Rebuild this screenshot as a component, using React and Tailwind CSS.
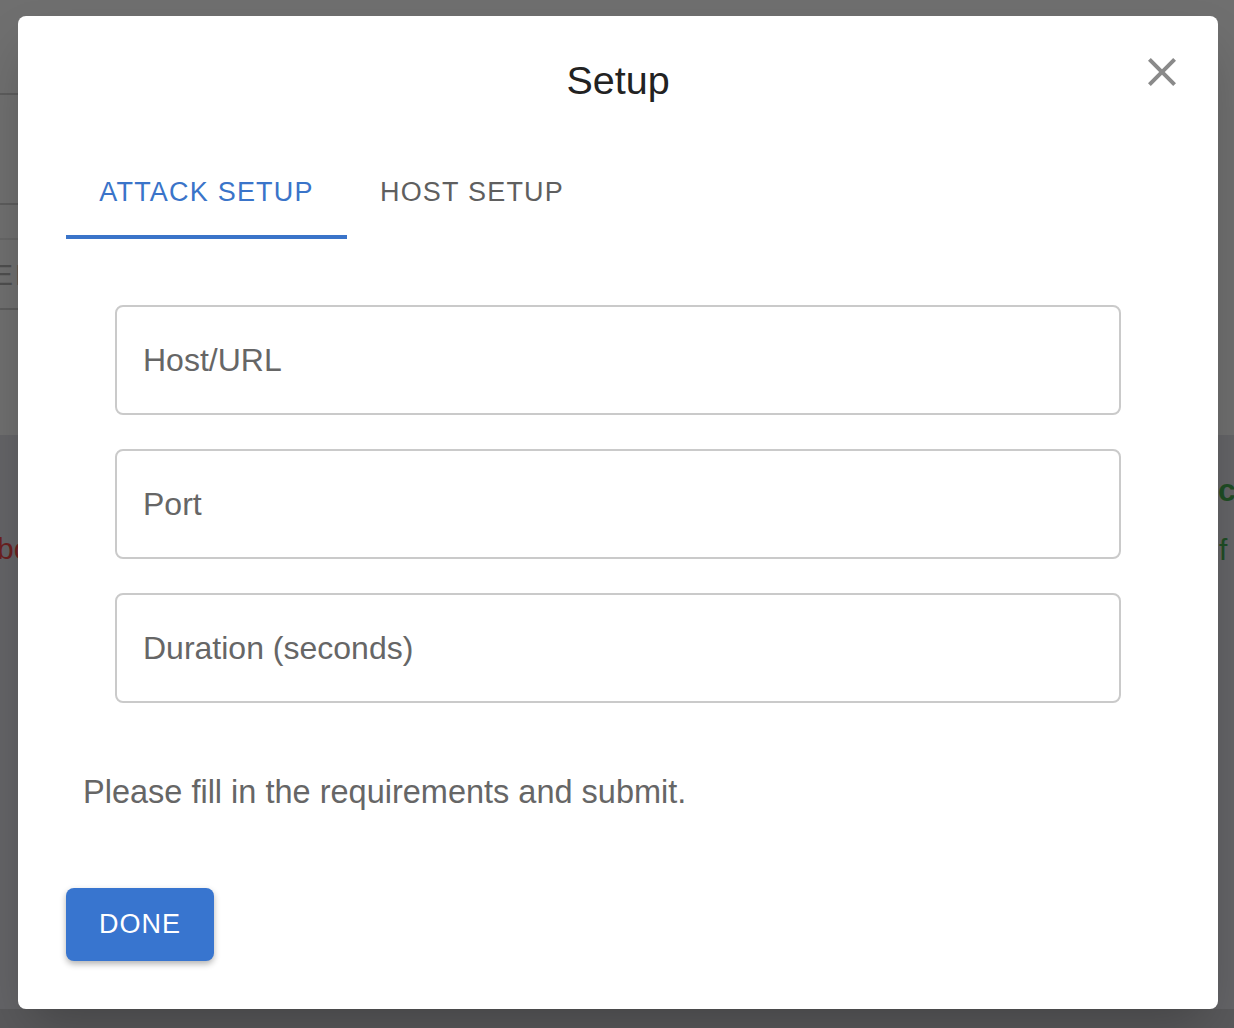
import React, { useState } from 'react';

const font = { fontFamily: '"Liberation Sans", Arial, sans-serif' };

function CloseIcon() {
  return (
    <svg viewBox="0 0 24 24" className="h-[48px] w-[48px]" fill="#8a8a8a">
      <path d="M19 6.41 17.59 5 12 10.59 6.41 5 5 6.41 10.59 12 5 17.59 6.41 19 12 13.41 17.59 19 19 17.59 13.41 12z" />
    </svg>
  );
}

function Field({ label }) {
  return (
    <div className="h-[110px] border-2 border-[#cacaca] rounded-[8px] px-[26px] flex items-center text-[32px] text-[#666]">
      {label}
    </div>
  );
}

export default function App() {
  const [tab, setTab] = useState(0);

  return (
    <div className="relative w-[1234px] h-[1028px] overflow-hidden bg-[#646467]" style={font}>
      {/* page behind the dialog */}
      <div className="h-[435px] bg-[#6f6f6f] flex flex-col">
        <div className="h-[95px] w-[600px] border-b-2 border-[#5c5c5c]" />
        <div className="h-[110px] w-[600px] border-b-2 border-[#5c5c5c]" />
        <div className="h-[35px] w-[600px] border-b-2 border-[#666]" />
        <div className="h-[70px] w-[600px] border-b-2 border-[#5c5c5c] flex items-center">
          <span className="-ml-[7px] text-[30px] tracking-[2px] text-[#4e4e4e]">EN</span>
        </div>
      </div>
      <div className="h-[574px] flex justify-between">
        <div className="flex flex-col">
          <span className="-ml-[3px] mt-[91px] text-[30px] text-[#6b2020]">bo</span>
        </div>
        <div className="flex flex-col items-start w-[16px]">
          <span className="mt-[31px] text-[32px] font-bold text-[#1f4d25]">co</span>
          <span className="mt-[13px] text-[30px] text-[#1f4d25] ml-[1px]">f</span>
        </div>
      </div>
      <div className="h-[19px] bg-[#59595b]" />

      {/* dialog */}
      <div className="absolute left-[18px] top-[16px] w-[1200px] h-[993px] bg-white rounded-[8px] shadow-2xl flex flex-col">
        <div className="relative h-[127px] flex items-center justify-center">
          <h2 className="text-[39.5px] text-[#222] pt-[2px]">Setup</h2>
          <button className="absolute right-[32px] top-[32px]">
            <CloseIcon />
          </button>
        </div>

        <div className="ml-[48px] flex h-[96px]">
          {['ATTACK SETUP', 'HOST SETUP'].map((t, i) => (
            <button
              key={t}
              onClick={() => setTab(i)}
              className={`relative flex items-center justify-center pt-[2px] text-[27px] tracking-[1.2px] ${
                i === 0 ? 'w-[281px]' : 'w-[250px]'
              } ${tab === i ? 'text-[#3a74c9]' : 'text-[#5f5f5f]'}`}
            >
              {t}
              {tab === i && <span className="absolute left-0 right-0 bottom-0 h-[4px] bg-[#3a74c9]" />}
            </button>
          ))}
        </div>

        <div className="mx-[97px] mt-[66px] flex flex-col gap-[34px]">
          <Field label="Host/URL" />
          <Field label="Port" />
          <Field label="Duration (seconds)" />
        </div>

        <p className="ml-[65px] mt-[69px] text-[32.5px] leading-[40px] text-[#666]">
          Please fill in the requirements and submit.
        </p>

        <div className="ml-[48px] mt-[76px]">
          <button className="w-[148px] h-[73px] rounded-[8px] bg-[#3875cf] text-white text-[27px] tracking-[1px] shadow-[0_3px_6px_rgba(0,0,0,0.3)]">
            DONE
          </button>
        </div>
      </div>
    </div>
  );
}
